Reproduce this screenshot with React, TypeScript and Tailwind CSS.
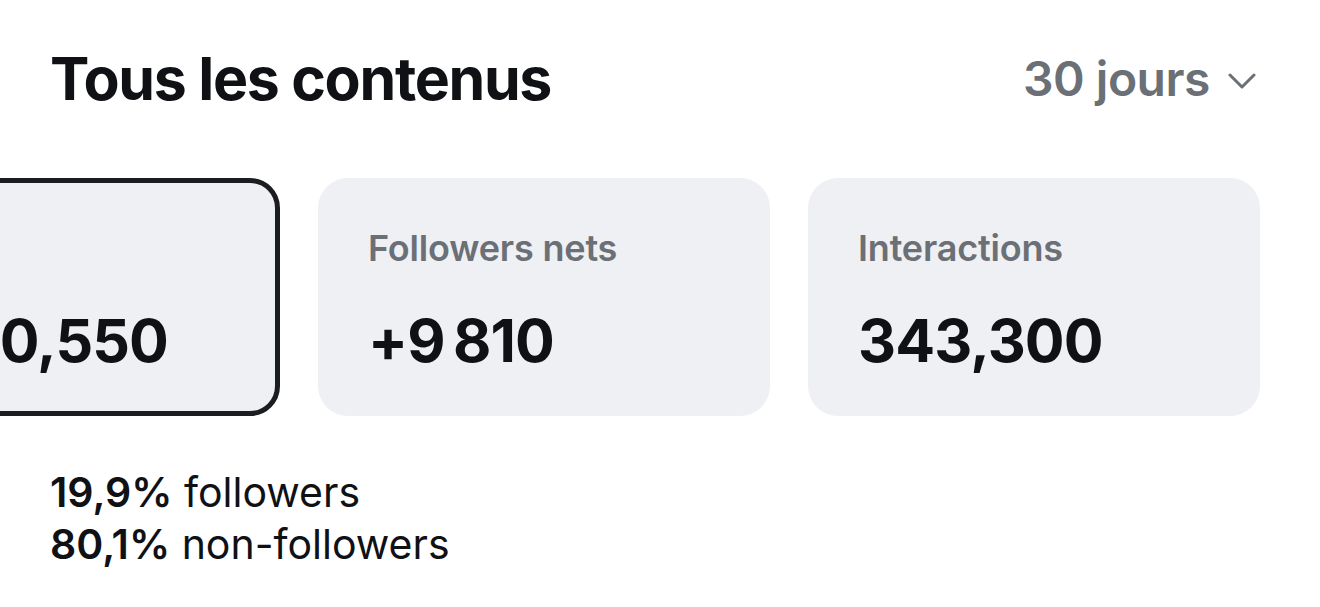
const cards = [
	{ label: 'Vues', value: '1,230,550', active: true },
	{ label: 'Followers nets', value: '+9\u2009810', active: false },
	{ label: 'Interactions', value: '343,300', active: false },
];

export default function App() {
	return (
		<div className="w-[1320px] h-[607px] overflow-hidden bg-white text-[#0f1115]" style={{ fontFamily: 'Inter, "Liberation Sans", sans-serif' }}>
			{/* Header */}
			<div className="flex items-center justify-between pl-[50px] pr-[64px] pt-[42px] h-[116px]">
				<h1 className="text-[59px] leading-[72px] font-bold tracking-[-0.022em]">Tous les contenus</h1>
				<button className="flex items-center gap-[18px] text-[#6b6f76] text-[48px] font-semibold tracking-[-0.01em]">
					30 jours
					<svg className="w-[28px] h-[16px] mt-[4px]" viewBox="0 0 28 16" fill="none" stroke="currentColor" strokeWidth={3} strokeLinecap="round" strokeLinejoin="round">
						<path d="M2 2l12 12L26 2" />
					</svg>
				</button>
			</div>

			{/* Metric cards */}
			<div className="flex gap-[38px] ml-[-172px] mt-[62px]">
				{cards.map((c) => (
					<div
						key={c.label}
						className={`shrink-0 w-[452px] h-[238px] rounded-[30px] bg-[#eff0f4] px-[50px] pt-[48px] ${c.active ? 'border-[5px] border-[#1c1d21]' : ''}`}
					>
						<p className={`text-[36px] leading-[44px] font-semibold text-[#6b6f76] tracking-[-0.005em] ${c.active ? 'mt-[-5px] ml-[-5px]' : ''}`}>{c.label}</p>
						<p className="mt-[35px] text-[59px] leading-[72px] font-bold tracking-[-0.015em]">{c.value}</p>
					</div>
				))}
			</div>

			{/* Audience split */}
			<div className="pl-[50px] mt-[50px] text-[41px] leading-[52px]">
				<p><span className="font-semibold">19,9%</span> followers</p>
				<p><span className="font-semibold">80,1%</span> non-followers</p>
			</div>
		</div>
	);
}
